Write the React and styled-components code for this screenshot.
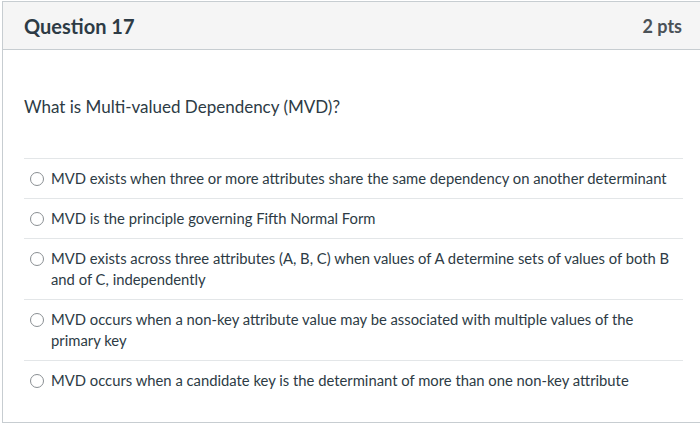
import React from "react";
import styled, { createGlobalStyle } from "styled-components";

const Global = createGlobalStyle`
  html, body { margin: 0; padding: 0; background: #fff; }
  body { font-family: Lato, "Open Sans", sans-serif; color: #2d3b45; overflow: hidden; }
`;

const Page = styled.div`
  padding: 1px 0 0 2px;
  width: 700px;
  box-sizing: border-box;
`;

const Card = styled.div`
  width: 699px;
  box-sizing: border-box;
  border: 1px solid #c7cdd1;
  border-right: none;
  background: #fff;
`;

const Header = styled.div`
  display: flex;
  align-items: center;
  justify-content: space-between;
  height: 47px;
  padding: 0 19px 0 21px;
  background: #f5f5f5;
  border-bottom: 1px solid #c7cdd1;
`;

const Title = styled.div`
  font-size: 20px;
  font-weight: 700;
  color: #2d3b45;
`;

const Points = styled.div`
  font-size: 18px;
  font-weight: 700;
  color: #4b5257;
`;

const Body = styled.div`
  padding: 46px 18px 22px 21px;
`;

const Prompt = styled.div`
  font-size: 17px;
  line-height: 22px;
  margin-bottom: 40px;
`;

const Options = styled.div`
  display: flex;
  flex-direction: column;
`;

const Option = styled.label`
  display: flex;
  align-items: flex-start;
  gap: 7px;
  padding: 9px 0 9px 6px;
  border-top: 1px solid #e3e6e8;
  font-size: 14.8px;
  line-height: 21px;
  color: #2d3b45;
`;

const Radio = styled.span`
  flex: none;
  box-sizing: border-box;
  width: 14px;
  height: 14px;
  margin-top: 4px;
  border: 1.4px solid #8a8f93;
  border-radius: 50%;
  background: #fff;
`;

const Text = styled.span`
  flex: 1;
`;

const options = [
  "MVD exists when three or more attributes share the same dependency on another determinant",
  "MVD is the principle governing Fifth Normal Form",
  "MVD exists across three attributes (A, B, C) when values of A determine sets of values of both B and of C, independently",
  "MVD occurs when a non-key attribute value may be associated with multiple values of the primary key",
  "MVD occurs when a candidate key is the determinant of more than one non-key attribute",
];

export default function App() {
  return (
    <>
      <Global />
      <Page>
        <Card>
          <Header>
            <Title>Question 17</Title>
            <Points>2 pts</Points>
          </Header>
          <Body>
            <Prompt>What is Multi-valued Dependency (MVD)?</Prompt>
            <Options>
              {options.map((o) => (
                <Option key={o}>
                  <Radio />
                  <Text>{o}</Text>
                </Option>
              ))}
            </Options>
          </Body>
        </Card>
      </Page>
    </>
  );
}
